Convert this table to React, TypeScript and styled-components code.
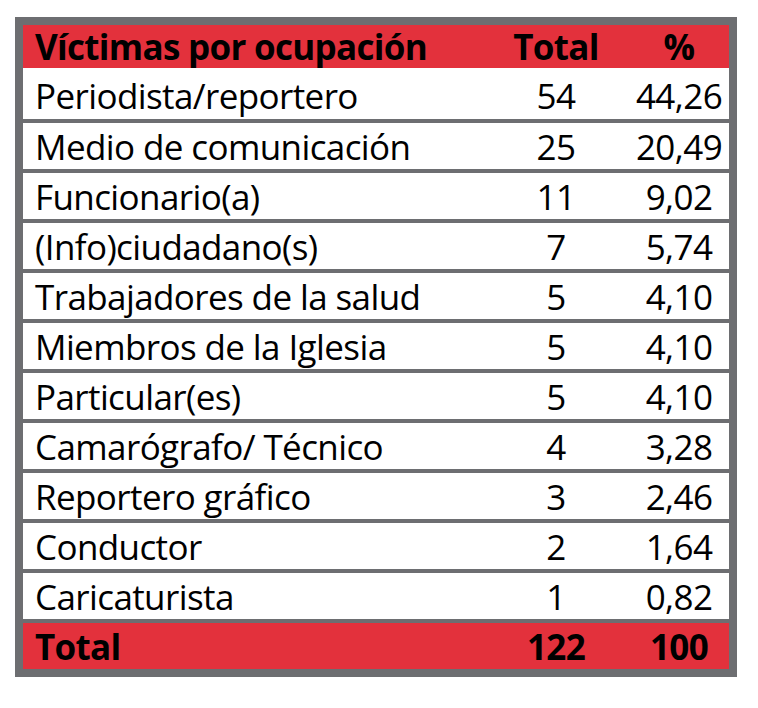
import * as React from "react";
import styled, { createGlobalStyle } from "styled-components";

const GRAY = "#6d6e71";
const RED = "#e3313c";

const GlobalStyle = createGlobalStyle`
  body {
    margin: 0;
    background: #ffffff;
    font-family: "Open Sans", "Noto Sans", sans-serif;
  }
`;

const rows: [string, string, string][] = [
  ["Periodista/reportero", "54", "44,26"],
  ["Medio de comunicación", "25", "20,49"],
  ["Funcionario(a)", "11", "9,02"],
  ["(Info)ciudadano(s)", "7", "5,74"],
  ["Trabajadores de la salud", "5", "4,10"],
  ["Miembros de la Iglesia", "5", "4,10"],
  ["Particular(es)", "5", "4,10"],
  ["Camarógrafo/ Técnico", "4", "3,28"],
  ["Reportero gráfico", "3", "2,46"],
  ["Conductor", "2", "1,64"],
  ["Caricaturista", "1", "0,82"],
];

export default function App() {
  return (
    <>
      <GlobalStyle />
      <Page>
        <Frame>
          <Row variant="head">
            <Label bold>Víctimas por ocupación</Label>
            <Num bold>Total</Num>
            <Num bold>%</Num>
          </Row>
          {rows.map(([label, total, pct], i) => (
            <Row key={label} variant={i === 0 ? "first" : "body"}>
              <Label>{label}</Label>
              <Num>{total}</Num>
              <Num>{pct}</Num>
            </Row>
          ))}
          <Row variant="foot">
            <Label bold>Total</Label>
            <Num bold>122</Num>
            <Num bold>100</Num>
          </Row>
        </Frame>
      </Page>
    </>
  );
}

const Page = styled.div`
  padding: 17px 0 0 15px;
`;

const Frame = styled.div`
  width: 722px;
  box-sizing: border-box;
  border: 8px solid ${GRAY};
  display: flex;
  flex-direction: column;
`;

const Row = styled.div<{ variant: "head" | "first" | "body" | "foot" }>`
  display: grid;
  grid-template-columns: 460px 146px 100px;
  align-items: center;
  box-sizing: border-box;
  background: ${({ variant }) =>
    variant === "head" || variant === "foot" ? RED : "#ffffff"};
  height: ${({ variant }) =>
    variant === "head" ? 43 : variant === "first" ? 51 : 50}px;
  padding-top: ${({ variant }) => (variant === "first" ? 3 : 0)}px;
  border-top: ${({ variant }) =>
    variant === "body" || variant === "foot" ? `4px solid ${GRAY}` : "none"};
`;

const Label = styled.div<{ bold?: boolean }>`
  padding-left: 12px;
  font-size: 35px;
  line-height: 1;
  font-weight: ${({ bold }) => (bold ? 700 : 400)};
  letter-spacing: ${({ bold }) => (bold ? "-0.7px" : "-0.6px")};
  color: #000000;
  white-space: nowrap;
`;

const Num = styled(Label)`
  padding-left: 0;
  text-align: center;
`;
